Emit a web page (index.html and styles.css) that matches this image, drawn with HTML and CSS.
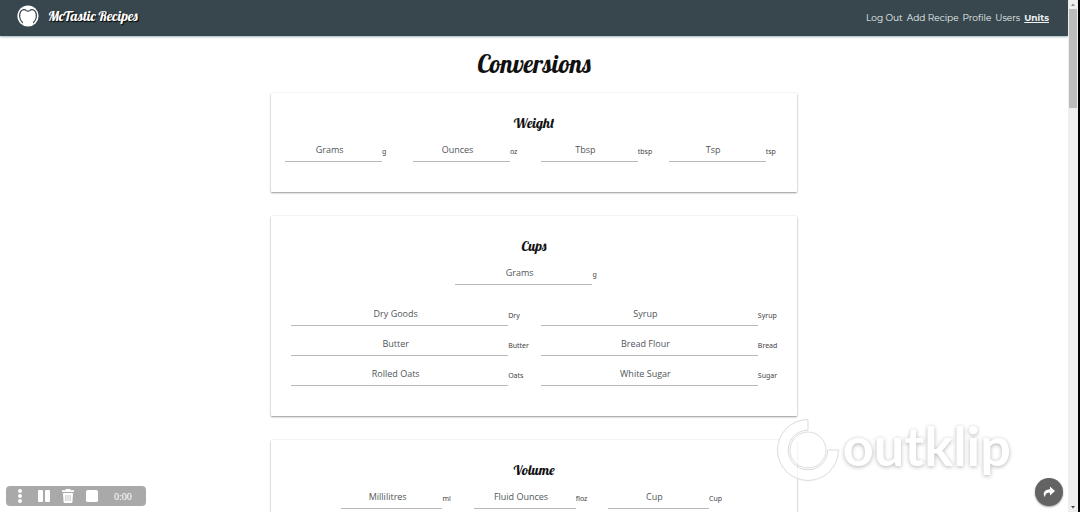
FILE: index.html
```html
<!DOCTYPE html>
<html lang="en">
<head>
<meta charset="utf-8">
<title>McTastic Recipes - Conversions</title>
<link rel="stylesheet" href="styles.css">
</head>
<body>
<div class="page">
  <header class="navbar">
    <a class="brand" href="#">
      <svg class="brand-logo" viewBox="0 0 22 22" aria-hidden="true">
        <circle cx="11" cy="11" r="10.6" fill="#fff"/>
        <path d="M5.500 17.500C2.300 14.500 1.800 9.500 3.600 6.600C5.200 4.200 8 4.200 9.300 5.600C10 6.300 12 6.300 12.700 5.600C14 4.200 16.800 4.200 18.400 6.600C20.200 9.500 19.700 14.500 16.500 17.500" fill="none" stroke="#37474d" stroke-width="1.200" stroke-linecap="round"/>
      </svg>
      <span class="brand-name">McTastic Recipes</span>
    </a>
    <nav class="nav-links">
      <a href="#">Log Out</a>
      <a href="#">Add Recipe</a>
      <a href="#">Profile</a>
      <a href="#">Users</a>
      <a class="active" href="#">Units</a>
    </nav>
  </header>

  <main class="content">
    <h1>Conversions</h1>

    <section class="card">
      <h2>Weight</h2>
      <div class="row four">
        <div class="field"><input id="w-g" type="text" placeholder="Grams"><label for="w-g">g</label></div>
        <div class="field"><input id="w-oz" type="text" placeholder="Ounces"><label for="w-oz">oz</label></div>
        <div class="field"><input id="w-tbsp" type="text" placeholder="Tbsp"><label for="w-tbsp">tbsp</label></div>
        <div class="field"><input id="w-tsp" type="text" placeholder="Tsp"><label for="w-tsp">tsp</label></div>
      </div>
    </section>

    <section class="card">
      <h2>Cups</h2>
      <div class="row one">
        <div class="field"><input id="c-g" type="text" placeholder="Grams"><label for="c-g">g</label></div>
      </div>
      <div class="row two">
        <div class="field"><input id="c-dry" type="text" placeholder="Dry Goods"><label for="c-dry">Dry</label></div>
        <div class="field"><input id="c-syrup" type="text" placeholder="Syrup"><label for="c-syrup">Syrup</label></div>
        <div class="field"><input id="c-butter" type="text" placeholder="Butter"><label for="c-butter">Butter</label></div>
        <div class="field"><input id="c-bread" type="text" placeholder="Bread Flour"><label for="c-bread">Bread</label></div>
        <div class="field"><input id="c-oats" type="text" placeholder="Rolled Oats"><label for="c-oats">Oats</label></div>
        <div class="field"><input id="c-sugar" type="text" placeholder="White Sugar"><label for="c-sugar">Sugar</label></div>
      </div>
    </section>

    <section class="card">
      <h2>Volume</h2>
      <div class="row three">
        <div class="field"><input id="v-ml" type="text" placeholder="Millilitres"><label for="v-ml">ml</label></div>
        <div class="field"><input id="v-floz" type="text" placeholder="Fluid Ounces"><label for="v-floz">floz</label></div>
        <div class="field"><input id="v-cup" type="text" placeholder="Cup"><label for="v-cup">Cup</label></div>
      </div>
    </section>
  </main>
</div>

<div class="scrollbar" aria-hidden="true">
  <svg class="arrow" viewBox="0 0 10 9"><path d="M3 6L5 3.500L7 6Z" fill="#888"/></svg>
  <div class="track"><div class="thumb"></div></div>
  <svg class="arrow" viewBox="0 0 10 9"><path d="M3 3L5 5.500L7 3Z" fill="#444"/></svg>
</div>

<div class="recorder">
  <button type="button" aria-label="Move"><svg viewBox="0 0 14 14"><circle cx="7" cy="2" r="2"/><circle cx="7" cy="7" r="2"/><circle cx="7" cy="12" r="2"/></svg></button>
  <button type="button" aria-label="Pause"><svg viewBox="0 0 14 14"><rect x="1" y="1" width="5" height="12" rx="1"/><rect x="8" y="1" width="5" height="12" rx="1"/></svg></button>
  <button type="button" aria-label="Delete"><svg viewBox="0 0 14 14"><path d="M4.500 0h5v1.300H13V3H1V1.300h3.500z"/><path d="M2 4h10l-.6 9.200q-.1.800-1 .8H3.600q-.9 0-1-.8z"/><path d="M4.800 6v6M7 6v6M9.200 6v6" stroke="#a9a9a9" stroke-width=".7"/></svg></button>
  <button type="button" aria-label="Stop"><svg viewBox="0 0 14 14"><rect x="1" y="1" width="12" height="12" rx="1.500"/></svg></button>
  <span class="timer">0:00</span>
</div>

<div class="watermark">
  <svg viewBox="0 0 64 64" aria-hidden="true">
    <g fill="#fff" fill-opacity=".7" stroke="#d2d2d2" stroke-width=".8">
      <path d="M32 1.500A30.500 30.500 0 1 0 62.500 32H51.800A19.800 19.800 0 1 1 32 12.200Z"/>
      <circle cx="32" cy="32" r="18"/>
    </g>
  </svg>
  <span>outklip</span>
</div>

<button class="share" type="button" aria-label="Share">
  <svg viewBox="0 0 14 14"><path d="M8 1.500L13 6L8 10.500V7.700C5 7.500 3.200 8.500 3 12.300C.2 8 2.500 4.300 8 4.200Z" fill="#fff"/></svg>
</button>
</body>
</html>
```
FILE: styles.css
```css
* { box-sizing: border-box; }

body {
  margin: 0;
  height: 100vh;
  display: flex;
  overflow: hidden;
  background: #fff;
  color: #111;
  font-family: "Open Sans", "Noto Sans", sans-serif;
}

.page {
  flex: 1;
  min-width: 0;
  overflow: hidden;
}

.navbar {
  display: flex;
  align-items: center;
  justify-content: space-between;
  height: 36px;
  padding: 0 19px 4px 17px;
  background: #37474d;
  box-shadow: 0 1px 2px #9fb4bb;
}

.brand {
  display: flex;
  align-items: center;
  gap: 9px;
  color: #fff;
  text-decoration: none;
}

.brand-logo { width: 22px; height: 22px; }

.brand-name, h1, h2 {
  font-family: "Lobster", "Liberation Serif", serif;
  font-weight: normal;
}

.brand-name {
  font-size: 14px;
  text-shadow: 1px 1px 1px #000;
}

.nav-links {
  display: flex;
  gap: 4px;
  padding-top: 3px;
  font-family: "Montserrat", "Inter", sans-serif;
  font-size: 9px;
}

.nav-links a { color: #eef2f3; text-decoration: none; }
.nav-links .active { font-weight: bold; text-decoration: underline; }

.content {
  width: 49.2%;
  margin: 0 auto;
}

h1, h2 { margin: 0; text-align: center; }
h1 { padding: 12px 0 13px; font-size: 25px; line-height: 32px; }
h2 { margin-bottom: 5px; font-size: 14px; line-height: 20px; }

.card {
  margin-bottom: 24px;
  padding: 20px 7px 30px;
  border-radius: 1px;
  background: #fff;
  box-shadow: 0 1px 2px rgba(0, 0, 0, .4), 0 0 2px rgba(0, 0, 0, .1);
}

.row { display: grid; row-gap: 6px; }
.four { grid-template-columns: repeat(4, 1fr); }
.one { width: 172px; margin: 0 auto 17px; }
.two { grid-template-columns: repeat(2, 1fr); padding: 0 6px; }
.three { grid-template-columns: repeat(3, 1fr); width: 400px; margin: 0 auto; }

.field {
  display: flex;
  align-items: center;
  min-width: 0;
  padding: 0 7px;
}

.field input {
  flex: 0 0 auto;
  width: 85%;
  height: 24px;
  padding: 0 8px 0 0;
  border: 0;
  border-bottom: 1px solid #b9b9b9;
  background: transparent;
  text-align: center;
  font-family: inherit;
  font-size: 9px;
  color: #444;
}

.one input { width: 87%; }
.two input { width: 92%; }
.field input::placeholder { color: #50565a; opacity: 1; }
.field input:focus { outline: none; border-color: #37474d; }

.field label {
  padding-top: 4px;
  font-family: "Noto Sans", sans-serif;
  font-size: 7px;
  line-height: 10px;
  color: #444;
}

.scrollbar {
  display: flex;
  flex-direction: column;
  width: 12px;
  border-right: 2px solid #000;
  background: #eee;
}

.arrow { display: block; width: 10px; height: 9px; }
.track { flex: 1; padding: 0 1px; }
.thumb { height: 20%; background: #bcbcbc; }

.recorder {
  position: absolute;
  left: 6px;
  bottom: 6px;
  display: flex;
  align-items: center;
  gap: 10px;
  height: 20px;
  padding: 0 14px 0 7px;
  border-radius: 4px;
  background: #a9a9a9;
  color: #fff;
}

.recorder button {
  display: flex;
  padding: 0;
  border: 0;
  background: none;
}

.recorder svg { width: 14px; height: 14px; fill: #fff; }
.timer {
  padding-left: 5px;
  font-family: "Liberation Serif", serif;
  font-size: 10px;
}

.watermark {
  position: absolute;
  right: 69px;
  bottom: 30px;
  display: flex;
  align-items: center;
  gap: 3px;
  height: 64px;
  pointer-events: none;
}

.watermark svg { width: 64px; height: 64px; }
.watermark span {
  padding-bottom: 8px;
  font-family: "Lato", sans-serif;
  font-size: 54px;
  font-weight: bold;
  line-height: 56px;
  color: #fff;
  text-shadow: 0 1px 4px rgba(0, 0, 0, .3);
}

.share {
  position: absolute;
  right: 17px;
  bottom: 6px;
  display: flex;
  align-items: center;
  justify-content: center;
  width: 28px;
  height: 28px;
  padding: 0;
  border: 0;
  border-radius: 50%;
  background: #636363;
  box-shadow: 0 1px 2px rgba(0, 0, 0, .4);
}

.share svg { width: 14px; height: 14px; }
```
